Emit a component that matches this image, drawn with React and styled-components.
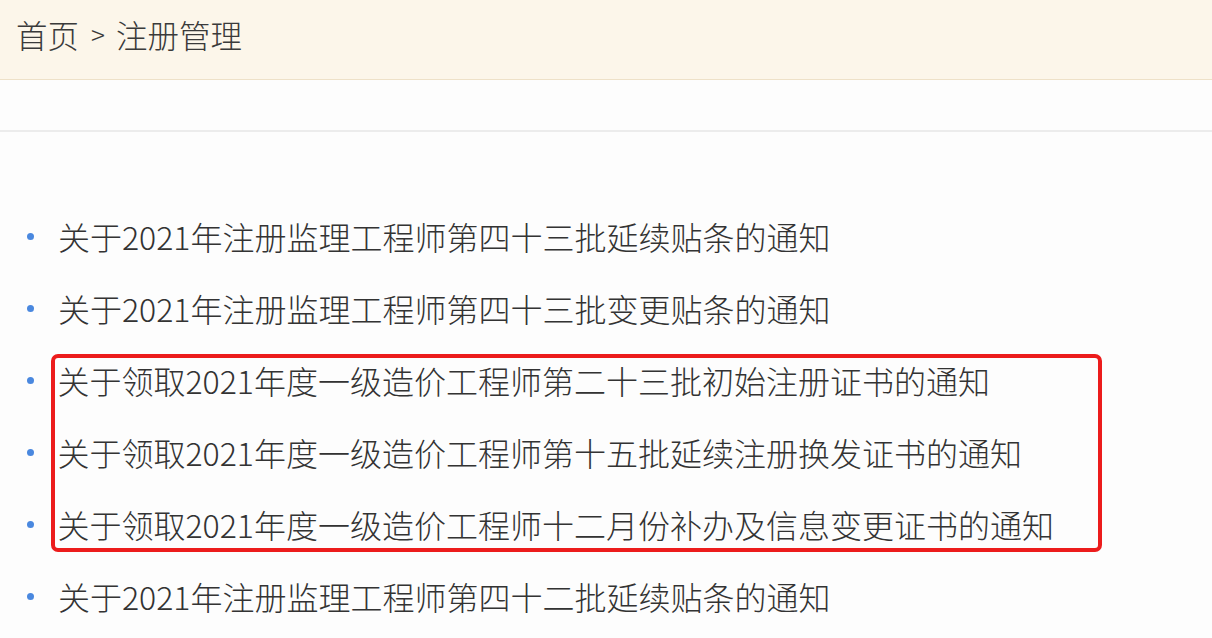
import React from 'react'
import styled, { createGlobalStyle } from 'styled-components'

const GlobalStyle = createGlobalStyle`
  html, body {
    margin: 0;
    padding: 0;
    background: #fdfdfd;
    font-family: "Noto Sans CJK SC", "Noto Sans", sans-serif;
  }
`

const Page = styled.div`
  width: 1212px;
  height: 638px;
  overflow: hidden;
  background: #fdfdfd;
`

const Crumbs = styled.div`
  height: 80px;
  box-sizing: border-box;
  display: flex;
  align-items: center;
  padding: 0 0 12px 16px;
  background: #fcf6ea;
  border-bottom: 1px solid #eee1c8;
  color: #3a3a3a;
  font-size: 31.5px;
  font-weight: 300;
`

const Sep = styled.span`
  margin: 0 11px 0 12px;
  font-size: 26px;
`

const Spacer = styled.div`
  height: 50px;
  border-bottom: 2px solid #ececec;
`

const List = styled.ul`
  list-style: none;
  margin: 0;
  padding: 68px 0 0 0;
  display: flex;
  flex-direction: column;
`

const Highlight = styled.div`
  margin: 10px 0 8px 51px;
  width: 1051px;
  height: 198px;
  box-sizing: border-box;
  border: 4.5px solid #ec1c1c;
  border-radius: 7px;
`

const Inner = styled.ul`
  list-style: none;
  margin: -14.5px 0;
  padding: 0;
`

const Item = styled.li`
  position: relative;
  height: 72px;
  display: flex;
  align-items: center;
  padding-left: ${p => (p.boxed ? '2.5px' : '58px')};
  color: #333;
  font-size: 32px;
  font-weight: 300;
  white-space: nowrap;

  &::before {
    content: '';
    position: absolute;
    left: ${p => (p.boxed ? '-28.5px' : '27px')};
    top: 50%;
    width: 7px;
    height: 7px;
    margin-top: -3px;
    border-radius: 50%;
    background: #4a88df;
  }
`

const plain = [
  '关于2021年注册监理工程师第四十三批延续贴条的通知',
  '关于2021年注册监理工程师第四十三批变更贴条的通知',
]

const boxed = [
  '关于领取2021年度一级造价工程师第二十三批初始注册证书的通知',
  '关于领取2021年度一级造价工程师第十五批延续注册换发证书的通知',
  '关于领取2021年度一级造价工程师十二月份补办及信息变更证书的通知',
]

export default function App() {
  return (
    <Page>
      <GlobalStyle />
      <Crumbs>
        首页<Sep>&gt;</Sep>注册管理
      </Crumbs>
      <Spacer />
      <List>
        {plain.map(t => (
          <Item key={t}>{t}</Item>
        ))}
        <Highlight>
          <Inner>
            {boxed.map(t => (
              <Item key={t} boxed>
                {t}
              </Item>
            ))}
          </Inner>
        </Highlight>
        <Item>关于2021年注册监理工程师第四十二批延续贴条的通知</Item>
      </List>
    </Page>
  )
}
